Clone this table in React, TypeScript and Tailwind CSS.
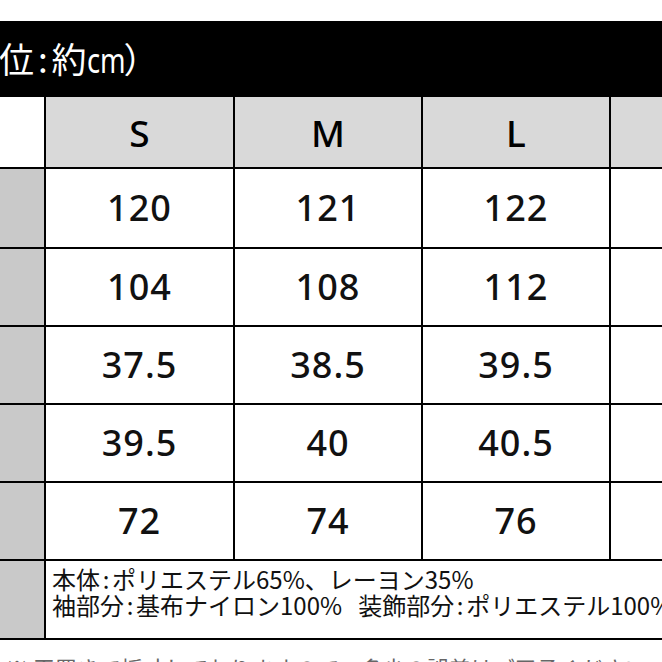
const sizes = ["S", "M", "L", ""];

const rows = [
  ["120", "121", "122", ""],
  ["104", "108", "112", ""],
  ["37.5", "38.5", "39.5", ""],
  ["39.5", "40", "40.5", ""],
  ["72", "74", "76", ""],
];

const jp = { fontFamily: '"Noto Sans CJK JP", "Noto Sans", sans-serif' };
const latin = { fontFamily: '"Noto Sans", "Noto Sans CJK JP", sans-serif' };

// half-width colon like the gothic fonts in the source sheet
const Colon = () => <span className="inline-block w-[0.5em] text-center">:</span>;

export default function App() {
  return (
    <div className="w-[662px] h-[662px] overflow-hidden bg-white" style={jp}>
      <div className="mt-[21px] h-[76px] bg-black flex items-center text-white text-[35px] leading-none whitespace-nowrap">
        <span className="-ml-[1px] -mt-[2px]">
          位<Colon />約
          <span className="inline-block w-[37px] origin-left scale-x-[0.78]" style={latin}>
            cm
          </span>
          <span>）</span>
        </span>
      </div>
      <div className="grid grid-cols-[44px_187px_186px_186px_1fr] grid-rows-[70px_78px_76px_76px_76px_76px_77px] gap-[2px] bg-black pb-[2px] w-[662px]">
        <div className="bg-white" />
        {sizes.map((s, i) => (
          <div
            key={i}
            className="bg-[#d9d9d9] flex items-center justify-center text-[37px] font-medium text-black leading-none"
            style={latin}
          >
            {s}
          </div>
        ))}
        {rows.map((r, ri) => (
          <>
            <div key={"l" + ri} className="bg-[#c9c9c9]" />
            {r.map((v, ci) => (
              <div
                key={ri + "-" + ci}
                className="bg-white flex items-center justify-center text-[36px] font-medium tracking-[1px] text-[#111] leading-none"
                style={latin}
              >
                {v}
              </div>
            ))}
          </>
        ))}
        <div className="bg-[#c9c9c9]" />
        <div className="col-span-4 bg-white overflow-hidden pl-[6px] pt-[5px] text-[24px] leading-[26px] text-[#111] whitespace-nowrap">
          <div>
            本体<Colon />ポリエステル65%、レーヨン35%
          </div>
          <div>
            袖部分<Colon />基布ナイロン100%&nbsp;&nbsp;&nbsp;装飾部分<Colon />ポリエステル100%
          </div>
        </div>
      </div>
      <div className="mt-[16px] pl-[6px] text-[22px] leading-none text-[#666] whitespace-nowrap">
        ※ 平置きで採寸しておりますので、多少の誤差はご了承ください。
      </div>
    </div>
  );
}
